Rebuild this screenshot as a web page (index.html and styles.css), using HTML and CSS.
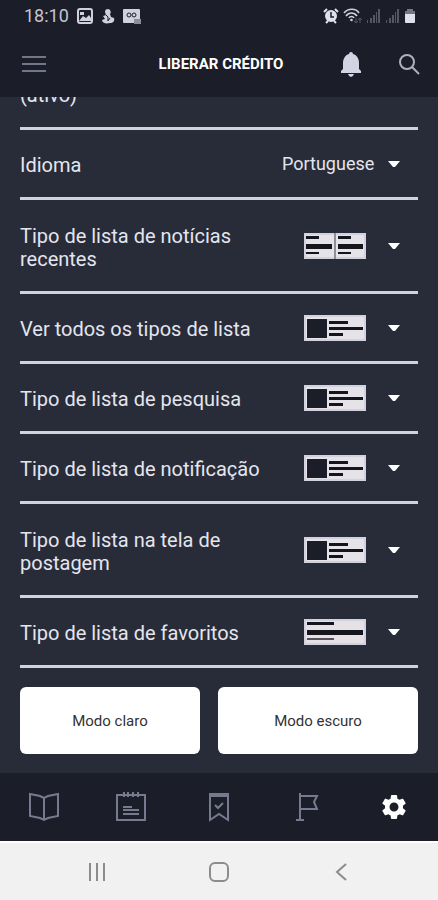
FILE: index.html
```html
<!DOCTYPE html>
<html lang="pt-BR">
<head>
  <meta charset="UTF-8">
  <meta name="viewport" content="width=device-width, initial-scale=1.0">
  <title>Liberar Crédito</title>
  <link rel="stylesheet" href="styles.css">
</head>
<body>
  <!-- Shared drawings -->
  <svg class="sprite" width="0" height="0" aria-hidden="true">
    <symbol id="caret" viewBox="0 0 12 8">
      <path d="M0 1h12L7 7H5z" fill="#fff"/>
    </symbol>
    <symbol id="thumb-card" viewBox="0 0 62 26">
      <path d="M0 0h62v26H0z" fill="#e6e3e8"/>
      <path d="M1 1h60v24H1z" fill="none" stroke="#d2d1df" stroke-width="2"/>
      <path d="M3 4h20v19H3z" fill="#1b1d29"/>
      <path d="M25 6h19v3H25zM25 12h34v3H25zM25 18h14v3H25z" fill="#15151d"/>
    </symbol>
    <symbol id="thumb-grid" viewBox="0 0 62 26">
      <path d="M0 0h62v26H0z" fill="#e6e3e8"/>
      <path d="M1 1h60v24H1z" fill="none" stroke="#d2d1df" stroke-width="2"/>
      <path d="M30 0h2v26h-2z" fill="#8f8f99"/>
      <path d="M2 3h13v3H2zM2 11h26v5H2zM2 19h13v2H2zM34 3h13v3H34zM34 11h25v5H34zM34 19h13v2H34z" fill="#15151d"/>
    </symbol>
    <symbol id="thumb-line" viewBox="0 0 62 26">
      <path d="M0 0h62v26H0z" fill="#e6e1e4"/>
      <path d="M1 1h60v24H1z" fill="none" stroke="#d2d1df" stroke-width="2"/>
      <path d="M3 3h27v3H3zM3 11h56v5H3z" fill="#15151d"/>
      <path d="M3 19h27v2H3z" fill="#56505a"/>
    </symbol>
    <symbol id="signal" viewBox="0 0 15 14">
      <path d="M1 11h1v3H1zM4 9h2v5H4zM7 6h2v8H7zM10 3h1v11h-1zM12 0h2v14h-2z" fill="#555765"/>
    </symbol>
  </svg>

  <!-- Phone status bar -->
  <div class="status">
    <div class="status-group">
      <span class="clock">18:10</span>
      <svg width="16" height="16" viewBox="0 0 16 16">
        <rect x="1" y="1" width="14" height="14" rx="2" fill="#1b1d29" stroke="#d0d1dc" stroke-width="2"/>
        <path d="M2 13l4-5 3 2 3-3 2 3v3z" fill="#d0d1dc"/>
        <path d="M3 4h4v3H3z" fill="#d0d1dc"/>
      </svg>
      <svg width="14" height="16" viewBox="0 0 14 16">
        <path d="M7 1a3 3 0 0 1 2 5l1 3 3 1c1 3-1 5-4 5-4 1-8 0-8-3l3-1-2-3 3-1-1-3a3 3 0 0 1 3-3z" fill="#d0d1dc"/>
        <path d="M5 7l2 2v4M9 10l-2 3" fill="none" stroke="#1b1d29"/>
      </svg>
      <svg width="18" height="16" viewBox="0 0 18 16">
        <rect x="0" y="1" width="17" height="14" rx="1" fill="#d0d1dc"/>
        <circle cx="6" cy="7" r="2" fill="none" stroke="#1b1d29"/>
        <circle cx="11" cy="7" r="2" fill="none" stroke="#1b1d29"/>
        <path d="M11 11h7v5h-7z" fill="#8b8d99"/>
      </svg>
    </div>
    <div class="status-group">
      <svg width="16" height="16" viewBox="0 0 16 16">
        <circle cx="8" cy="8" r="6" fill="#dfe0ea"/>
        <path d="M1 4l3-3M15 4l-3-3M3 15l2-2M13 15l-2-2" stroke="#dfe0ea" stroke-width="2"/>
        <path d="M8 4v5h3" fill="none" stroke="#1b1d29" stroke-width="1.5"/>
      </svg>
      <svg width="19" height="16" viewBox="0 0 19 16">
        <path d="M1 5c4-5 12-5 15 0M3 8c3-4 8-4 11 0M6 10c1-2 4-2 5 0" fill="none" stroke="#cfd0dc" stroke-width="1.6"/>
        <circle cx="8.5" cy="12" r="1.3" fill="#cfd0dc"/>
        <path d="M13 10v5M11 13l2 2 2-2M17 15v-5M15 12l2-2 2 2" fill="none" stroke="#555765"/>
      </svg>
      <svg width="15" height="14"><use href="#signal"/></svg>
      <svg width="15" height="14"><use href="#signal"/></svg>
      <svg width="12" height="16" viewBox="0 0 12 16">
        <path d="M3 1h6v2h2v4H1V3h2z" fill="#747683"/>
        <path d="M1 6h10v8q0 1-1 1H2q-1 0-1-1z" fill="#dfe0ea"/>
      </svg>
    </div>
  </div>

  <header class="header">
    <button class="icon-button" aria-label="Menu">
      <svg width="24" height="18" viewBox="0 0 24 18"><path d="M0 2h24M0 9h24M0 16h24" stroke="#737588" stroke-width="2"/></svg>
    </button>
    <h1 class="title">LIBERAR CRÉDITO</h1>
    <div class="header-actions">
      <button class="icon-button" aria-label="Notificações">
        <svg width="22" height="26" viewBox="0 0 22 26">
          <path d="M11 1q2 0 2 2c4 1 6 5 6 9v6l2 2v2H1v-2l2-2v-6c0-4 2-8 6-9q0-2 2-2z" fill="#d2d4e3"/>
          <path d="M8 23h6q-1 3-3 3t-3-3z" fill="#d2d4e3"/>
        </svg>
      </button>
      <button class="icon-button" aria-label="Buscar">
        <svg width="22" height="22" viewBox="0 0 22 22">
          <circle cx="9" cy="9" r="7" fill="none" stroke="#aeb0bf" stroke-width="2"/>
          <path d="M14 14l7 7" stroke="#aeb0bf" stroke-width="2"/>
        </svg>
      </button>
    </div>
  </header>

  <main class="settings">
    <div class="row">
      <span class="row-label">(ativo)</span>
    </div>

    <div class="row">
      <label class="row-label" for="idioma">Idioma</label>
      <div class="picker">
        <select id="idioma">
          <option>Portuguese</option>
        </select>
        <svg class="caret" width="12" height="8"><use href="#caret"/></svg>
      </div>
    </div>

    <div class="row row-tall">
      <label class="row-label" for="recentes">Tipo de lista de notícias recentes</label>
      <div class="picker">
        <svg class="thumb" width="62" height="26"><use href="#thumb-grid"/></svg>
        <select id="recentes"><option value="grid"></option></select>
        <svg class="caret" width="12" height="8"><use href="#caret"/></svg>
      </div>
    </div>

    <div class="row">
      <label class="row-label" for="todos">Ver todos os tipos de lista</label>
      <div class="picker">
        <svg class="thumb" width="62" height="26"><use href="#thumb-card"/></svg>
        <select id="todos"><option value="card"></option></select>
        <svg class="caret" width="12" height="8"><use href="#caret"/></svg>
      </div>
    </div>

    <div class="row">
      <label class="row-label" for="pesquisa">Tipo de lista de pesquisa</label>
      <div class="picker">
        <svg class="thumb" width="62" height="26"><use href="#thumb-card"/></svg>
        <select id="pesquisa"><option value="card"></option></select>
        <svg class="caret" width="12" height="8"><use href="#caret"/></svg>
      </div>
    </div>

    <div class="row">
      <label class="row-label" for="notificacao">Tipo de lista de notificação</label>
      <div class="picker">
        <svg class="thumb" width="62" height="26"><use href="#thumb-card"/></svg>
        <select id="notificacao"><option value="card"></option></select>
        <svg class="caret" width="12" height="8"><use href="#caret"/></svg>
      </div>
    </div>

    <div class="row row-tall">
      <label class="row-label" for="postagem">Tipo de lista na tela de postagem</label>
      <div class="picker">
        <svg class="thumb" width="62" height="26"><use href="#thumb-card"/></svg>
        <select id="postagem"><option value="card"></option></select>
        <svg class="caret" width="12" height="8"><use href="#caret"/></svg>
      </div>
    </div>

    <div class="row">
      <label class="row-label" for="favoritos">Tipo de lista de favoritos</label>
      <div class="picker">
        <svg class="thumb" width="62" height="26"><use href="#thumb-line"/></svg>
        <select id="favoritos"><option value="line"></option></select>
        <svg class="caret" width="12" height="8"><use href="#caret"/></svg>
      </div>
    </div>

    <div class="modes">
      <button class="mode">Modo claro</button>
      <button class="mode">Modo escuro</button>
    </div>
  </main>

  <!-- App tabs -->
  <nav class="tabs">
    <a href="#noticias" aria-label="Notícias">
      <svg width="30" height="30" viewBox="0 0 30 30" fill="none" stroke="#777a8f" stroke-width="2">
        <path d="M15 6L11 4 1 2v22l10 2 4 2 4-2 10-2V2L19 4zM15 6v22"/>
      </svg>
    </a>
    <a href="#postagens" aria-label="Postagens">
      <svg width="30" height="30" viewBox="0 0 30 30" fill="none" stroke="#777a8f" stroke-width="2">
        <path d="M1 3h28v25H1z"/>
        <path d="M8 0v5M12 0v5M17 0v5M22 0v5"/>
        <path d="M7 15h9M7 18h16M7 22h16"/>
      </svg>
    </a>
    <a href="#salvos" aria-label="Salvos">
      <svg width="20" height="30" viewBox="0 0 20 30" fill="none" stroke="#777a8f" stroke-width="2">
        <path d="M1 2h18v26l-9-6-9 6z"/>
        <path d="M1 4h18"/>
        <path d="M6 13l3 3 5-5"/>
      </svg>
    </a>
    <a href="#marcados" aria-label="Marcados">
      <svg width="24" height="30" viewBox="0 0 24 30" fill="none" stroke="#777a8f" stroke-width="2">
        <path d="M5 1v27M1 28h8M5 4h17l-3 6 3 7H5"/>
      </svg>
    </a>
    <a href="#ajustes" aria-label="Ajustes">
      <svg width="30" height="30" viewBox="0 0 24 24">
        <path fill="#fff" d="M19.14 12.94c.04-.3.06-.61.06-.94 0-.32-.02-.64-.07-.94l2.03-1.58c.18-.14.23-.41.12-.61l-1.92-3.32c-.12-.22-.37-.29-.59-.22l-2.39.96c-.5-.38-1.03-.7-1.62-.94l-.36-2.54c-.04-.24-.24-.41-.48-.41h-3.84c-.24 0-.43.17-.47.41l-.36 2.54c-.59.24-1.13.57-1.62.94l-2.39-.96c-.22-.08-.47 0-.59.22L2.74 8.87c-.12.21-.08.47.12.61l2.03 1.58c-.05.3-.09.63-.09.94s.02.64.07.94l-2.03 1.58c-.18.14-.23.41-.12.61l1.92 3.32c.12.22.37.29.59.22l2.39-.96c.5.38 1.03.7 1.62.94l.36 2.54c.05.24.24.41.48.41h3.84c.24 0 .44-.17.47-.41l.36-2.54c.59-.24 1.13-.56 1.62-.94l2.39.96c.22.08.47 0 .59-.22l1.92-3.32c.12-.22.07-.47-.12-.61l-2.01-1.58zM12 15.6c-1.98 0-3.6-1.62-3.6-3.6s1.62-3.6 3.6-3.6 3.6 1.62 3.6 3.6-1.62 3.6-3.6 3.6z"/>
      </svg>
    </a>
  </nav>

  <!-- Phone buttons -->
  <div class="system">
    <button aria-label="Recentes">
      <svg width="18" height="20" viewBox="0 0 18 20"><path d="M2 1v18M9 1v18M16 1v18" stroke="#8c8c8c" stroke-width="2"/></svg>
    </button>
    <button aria-label="Início">
      <svg width="20" height="20" viewBox="0 0 20 20"><rect x="1" y="1" width="18" height="18" rx="5" fill="none" stroke="#8c8c8c" stroke-width="2"/></svg>
    </button>
    <button aria-label="Voltar">
      <svg width="12" height="20" viewBox="0 0 12 20"><path d="M11 2l-9 8 9 8" fill="none" stroke="#8c8c8c" stroke-width="2"/></svg>
    </button>
  </div>
</body>
</html>
```
FILE: styles.css
```css
/* Basic reset */
* {
  margin: 0;
  padding: 0;
  box-sizing: border-box;
}

body {
  height: 100vh;
  display: flex;
  flex-direction: column;
  font-family: Roboto, sans-serif;
  background-color: #282c38;
  color: #e4e5ee;
}

svg {
  display: block;
  flex-shrink: 0;
}

.sprite {
  position: absolute;
}

button {
  border: none;
  background: none;
  font-family: inherit;
  cursor: pointer;
}

.status {
  height: 31px;
  padding: 0 22px 0 24px;
  display: flex;
  justify-content: space-between;
  align-items: center;
  background-color: #1b1d29;
}

.status-group {
  display: flex;
  align-items: center;
  gap: 4px;
}

.status-group:first-child {
  gap: 8px;
}

.clock {
  font-size: 18px;
  color: #c4c5d0;
}

.header {
  height: 66px;
  padding: 0 18px 0 22px;
  display: grid;
  grid-template-columns: 1fr auto 1fr;
  align-items: center;
  background-color: #1b1d29;
}

.icon-button {
  justify-self: start;
}

.title {
  font-size: 15px;
  font-weight: 700;
  color: #fff;
}

.header-actions {
  display: flex;
  justify-content: flex-end;
  align-items: center;
  gap: 36px;
}

/* The list is scrolled, so its first row is cut at the top */
.settings {
  flex: 1;
  min-height: 0;
  padding: 0 20px 19px;
  display: flex;
  flex-direction: column;
  justify-content: flex-end;
  overflow: hidden;
}

.row {
  min-height: 70px;
  flex-shrink: 0;
  display: flex;
  justify-content: space-between;
  align-items: center;
  border-bottom: 3px solid #cfd2e1;
}

.row-tall {
  min-height: 94px;
}

.row-label {
  max-width: 240px;
  padding-top: 4px;
  font-size: 20px;
  line-height: 23px;
}

.picker {
  display: grid;
  grid-template-columns: auto 12px;
  column-gap: 22px;
  align-items: center;
  padding-right: 18px;
}

.picker > * {
  grid-row: 1;
}

.picker select {
  grid-column: 1 / 3;
  height: 40px;
  padding-right: 25px;
  border: none;
  appearance: none;
  background: none;
  font-family: inherit;
  font-size: 18px;
  color: #e4e5ee;
}

.thumb {
  grid-column: 1;
}

.caret {
  grid-column: 2;
  pointer-events: none;
}

.modes {
  margin-top: 19px;
  display: grid;
  grid-template-columns: 9fr 10fr;
  gap: 18px;
}

.mode {
  height: 67px;
  border-radius: 6px;
  background-color: #fff;
  font-size: 15px;
  color: #333;
}

.tabs {
  height: 68px;
  display: grid;
  grid-template-columns: repeat(5, 1fr);
  background-color: #1b1d29;
}

.tabs a {
  display: flex;
  justify-content: center;
  align-items: center;
}

.system {
  height: 59px;
  padding: 0 36px;
  display: grid;
  grid-template-columns: repeat(3, 1fr);
  border-top: 2px solid #fff;
  background-color: #f1f1f1;
}

.system button {
  display: flex;
  justify-content: center;
  align-items: center;
}
```
